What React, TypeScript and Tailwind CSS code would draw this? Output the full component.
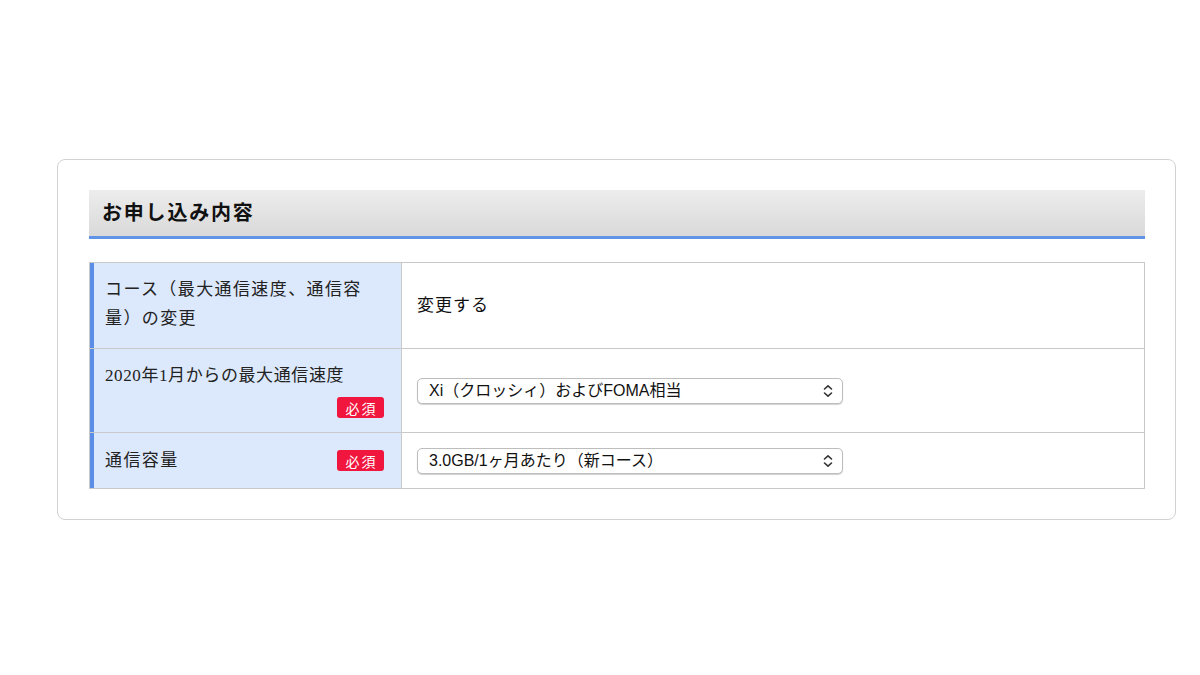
import React from "react";

const serif = { fontFamily: '"Liberation Serif", "Noto Sans CJK JP", serif' };

function Badge() {
  return (
    <span
      className="inline-flex h-[21px] w-[47px] items-center justify-center rounded-[3px] bg-[#f0163e] pl-[2px] text-[14px] leading-none tracking-[2px] text-white"
      style={{ fontFamily: '"Noto Sans CJK JP", sans-serif' }}
    >
      必須
    </span>
  );
}

function Chevron() {
  return (
    <svg width="10" height="14" viewBox="0 0 10 14" fill="none" stroke="#333" strokeWidth="1.6" strokeLinecap="round" strokeLinejoin="round">
      <path d="M1.5 5 L5 1.8 L8.5 5" />
      <path d="M1.5 9 L5 12.2 L8.5 9" />
    </svg>
  );
}

function SelectBox({ value }: { value: string }) {
  return (
    <div
      className="flex h-[26px] w-[426px] items-center justify-between rounded-[5px] border border-[#bdbdbd] bg-white pl-[11px] pr-[9px] text-[16px] text-[#111] shadow-[0_1px_1px_rgba(0,0,0,0.18)]"
      style={{ fontFamily: '"Liberation Sans", "Noto Sans CJK JP", sans-serif' }}
    >
      <span>{value}</span>
      <Chevron />
    </div>
  );
}

export default function App() {
  return (
    <div className="min-h-[675px] w-[1200px] bg-white pt-[159px]">
      <div className="ml-[57px] w-[1119px] rounded-[8px] border border-[#d2d2d2] bg-white pb-[30px] pl-[31px] pr-[30px] pt-[30px]">
        <div className="flex h-[49px] items-center border-b-[3px] border-[#6194e6] bg-gradient-to-b from-[#ededed] to-[#d9d9d9] pl-[13px]">
          <h2 className="text-[20px] font-bold tracking-[1.8px] text-[#111]" style={serif}>
            お申し込み内容
          </h2>
        </div>

        <div className="mt-[23px] border border-[#c9c9c9]" style={serif}>
          {/* Row 1 */}
          <div className="flex h-[85px]">
            <div className="w-[311px] shrink-0 border-l-4 border-[#5a8de6] bg-[#dce8fb] pl-[11px] pr-[17px] pt-[12px]">
              <p className="max-w-[266px] text-[17px] leading-[29px] tracking-[1.4px] text-[#222]">
                コース（最大通信速度、通信容量）の変更
              </p>
            </div>
            <div className="flex flex-1 items-center border-l border-[#c9c9c9] pl-[15px] text-[17px] tracking-[1px] text-[#111]">
              変更する
            </div>
          </div>

          {/* Row 2 */}
          <div className="flex h-[84px] border-t border-[#c9c9c9]">
            <div className="flex w-[311px] shrink-0 flex-col border-l-4 border-[#5a8de6] bg-[#dce8fb] pl-[11px] pr-[17px] pt-[12px]">
              <p className="text-[17px] leading-[29px] tracking-[0.6px] text-[#222]">
                2020年1月からの最大通信速度
              </p>
              <div className="mt-[7px] flex justify-end">
                <Badge />
              </div>
            </div>
            <div className="flex flex-1 items-center border-l border-[#c9c9c9] pl-[15px]">
              <SelectBox value="Xi（クロッシィ）およびFOMA相当" />
            </div>
          </div>

          {/* Row 3 */}
          <div className="flex h-[56px] border-t border-[#c9c9c9]">
            <div className="flex w-[311px] shrink-0 items-center justify-between border-l-4 border-[#5a8de6] bg-[#dce8fb] pl-[11px] pr-[17px]">
              <p className="text-[17px] leading-[29px] tracking-[1.4px] text-[#222]">通信容量</p>
              <Badge />
            </div>
            <div className="flex flex-1 items-center border-l border-[#c9c9c9] pl-[15px]">
              <SelectBox value="3.0GB/1ヶ月あたり（新コース）" />
            </div>
          </div>
        </div>
      </div>
    </div>
  );
}
